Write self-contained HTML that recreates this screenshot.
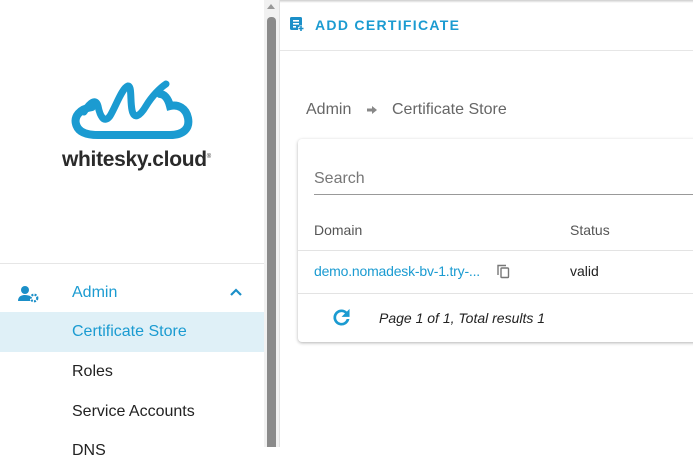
<!DOCTYPE html>
<html><head><style>
*{margin:0;padding:0;box-sizing:border-box}
body{width:693px;height:447px;overflow:hidden;background:#fff;font-family:"Liberation Sans",Arial,sans-serif;position:relative}
.abs{position:absolute}
</style></head><body>
<div class="abs" style="left:0;top:0;width:264px;height:447px;background:#fff"></div>
<svg class="abs" style="left:70px;top:80px" width="124" height="60" viewBox="0 0 124 60">
<path d="M22 27 C9 29 4 37 6 44 C8 52 16 55 28 55 L100 55 C114 55 120 48 118 38 C116 28 108 24 100 26 C98 18 94 14 90 14" fill="none" stroke="#1b9bd1" stroke-width="8" stroke-linecap="round"/>
<path d="M14 32 C20 22 26 18 28 26 C30 36 34 44 40 36 C46 26 52 8 58 6 C62 6 60 20 62 30 C64 40 70 36 76 26 C82 16 90 8 96 4" fill="none" stroke="#1b9bd1" stroke-width="7" stroke-linecap="round"/>
</svg>
<div class="abs" style="left:62px;top:148px;font-size:21px;font-weight:bold;color:#2a2a2a;letter-spacing:-0.3px">whitesky.cloud<sup style="font-size:6px;font-weight:normal">®</sup></div>
<div class="abs" style="left:0;top:263px;width:264px;height:1px;background:#e6e6e6"></div>
<svg class="abs" style="left:18px;top:285px" width="22" height="18" viewBox="0 0 22 18">
<circle cx="7" cy="5" r="4" fill="#1b8fc8"/><path d="M0 16 C0 11 4 10 7 10 C9 10 11 10.5 12 11 L12 16 Z" fill="#1b8fc8"/>
<circle cx="16" cy="13" r="3.3" fill="none" stroke="#1b8fc8" stroke-width="2.2" stroke-dasharray="2 1.2"/></svg>
<div class="abs" style="left:72px;top:284px;font-size:16px;color:#1b9bd1">Admin</div>
<svg class="abs" style="left:229px;top:287px" width="14" height="10" viewBox="0 0 14 10"><path d="M2 8 L7 3 L12 8" fill="none" stroke="#1b8fc8" stroke-width="2.2"/></svg>
<div class="abs" style="left:0;top:312px;width:264px;height:40px;background:#dff0f7"></div>
<div class="abs" style="left:72px;top:323px;font-size:16px;color:#1b9bd1">Certificate Store</div>
<div class="abs" style="left:72px;top:363px;font-size:16px;color:#222">Roles</div>
<div class="abs" style="left:72px;top:403px;font-size:16px;color:#222">Service Accounts</div>
<div class="abs" style="left:72px;top:442px;font-size:16px;color:#222">DNS</div>
<div class="abs" style="left:264px;top:0;width:15px;height:447px;background:#f1f1f1"></div>
<div class="abs" style="left:267px;top:4px;width:0;height:0;border-left:4px solid transparent;border-right:4px solid transparent;border-bottom:5px solid #999"></div>
<div class="abs" style="left:267px;top:17px;width:9px;height:430px;background:#8a8a8a;border-radius:4px 4px 0 0"></div>
<div class="abs" style="left:279px;top:0;width:1px;height:447px;background:#e0e0e0"></div>
<div class="abs" style="left:280px;top:0;width:413px;height:3px;background:linear-gradient(#ccc,#fff)"></div>
<svg class="abs" style="left:290px;top:17px" width="14" height="15" viewBox="0 0 14 15"><rect x="0" y="0" width="12" height="13" rx="1.5" fill="#1b8fc8"/><rect x="3" y="3" width="6" height="1.6" fill="#fff"/><rect x="3" y="6" width="6" height="1.6" fill="#fff"/><rect x="3" y="9" width="3" height="1.6" fill="#fff"/><path d="M8 11.5 H14 M11 8.5 V14.5" stroke="#fff" stroke-width="3"/><path d="M8.5 11.5 H13.5 M11 9 V14" stroke="#1b8fc8" stroke-width="1.6"/></svg>
<div class="abs" style="left:315px;top:17px;font-size:14px;font-weight:bold;color:#1b9bd1;letter-spacing:1.3px">ADD CERTIFICATE</div>
<div class="abs" style="left:280px;top:50px;width:413px;height:1px;background:#e6e6e6"></div>
<div class="abs" style="left:306px;top:101px;font-size:16px;color:#666">Admin</div>
<svg class="abs" style="left:366px;top:105px" width="12" height="10" viewBox="0 0 12 10"><path d="M1 3.5 H6 V1 L11 5 L6 9 V6.5 H1 Z" fill="#888"/></svg>
<div class="abs" style="left:392px;top:101px;font-size:16px;color:#666">Certificate Store</div>
<div class="abs" style="left:298px;top:139px;width:400px;height:203px;border-radius:4px;box-shadow:0 1px 3px rgba(0,0,0,.3);background:#fff"></div>
<div class="abs" style="left:314px;top:170px;font-size:16px;color:#777">Search</div>
<div class="abs" style="left:314px;top:194px;width:380px;height:1px;background:#999"></div>
<div class="abs" style="left:314px;top:222px;font-size:14px;color:#555">Domain</div>
<div class="abs" style="left:570px;top:222px;font-size:14px;color:#555">Status</div>
<div class="abs" style="left:298px;top:250px;width:395px;height:1px;background:#e3e3e3"></div>
<div class="abs" style="left:314px;top:263px;font-size:14px;color:#1b9bd1;letter-spacing:-0.2px">demo.nomadesk-bv-1.try-...</div>
<svg class="abs" style="left:497px;top:264px" width="13" height="15" viewBox="0 0 13 15"><path d="M1 11 V1.5 H9" fill="none" stroke="#777" stroke-width="1.4"/><rect x="4" y="4" width="7.5" height="9.5" rx="0.8" fill="none" stroke="#777" stroke-width="1.4"/></svg>
<div class="abs" style="left:570px;top:263px;font-size:14px;color:#222">valid</div>
<div class="abs" style="left:298px;top:293px;width:395px;height:1px;background:#e3e3e3"></div>
<svg class="abs" style="left:330px;top:306px" width="23" height="23" viewBox="0 0 24 24"><path d="M17.65 6.35A7.96 7.96 0 0 0 12 4a8 8 0 1 0 7.73 10h-2.08A6 6 0 1 1 12 6c1.66 0 3.14.69 4.22 1.78L13 11h7V4l-2.35 2.35z" fill="#1b9bd1" stroke="#1b9bd1" stroke-width="0.8"/></svg>
<div class="abs" style="left:379px;top:310px;font-size:14px;font-style:italic;color:#222">Page 1 of 1, Total results 1</div>
</body></html>
